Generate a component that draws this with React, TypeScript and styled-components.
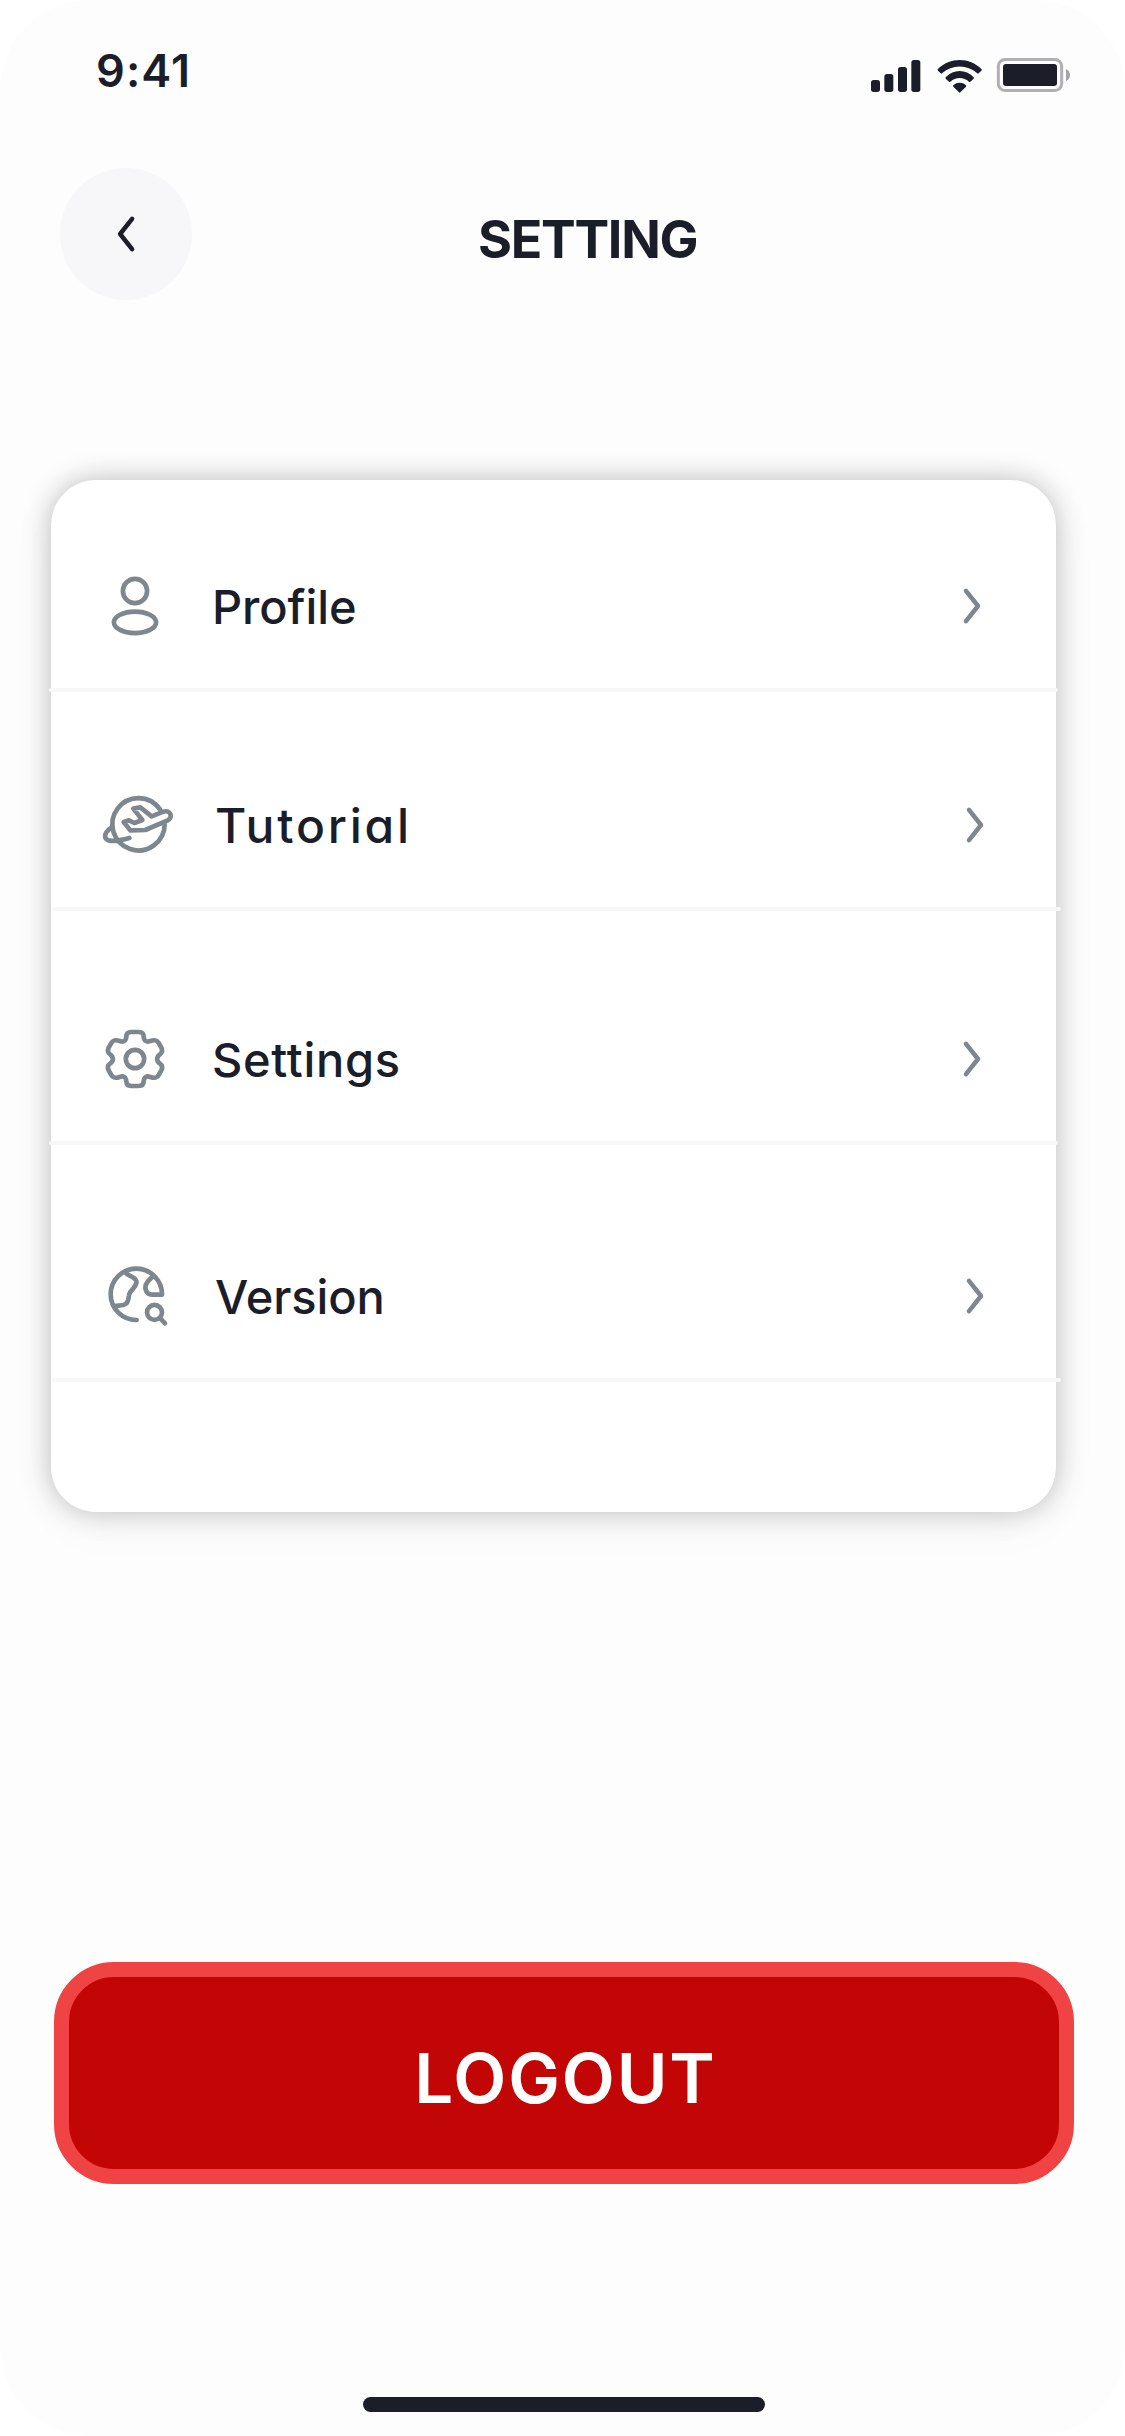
import React from "react";
import styled, { createGlobalStyle } from "styled-components";

const ink = "#1b1d28";
const muted = "#7e868e";

const GlobalStyle = createGlobalStyle`
  body { margin: 0; background: #fff; }
  *, *::before, *::after { box-sizing: border-box; }
`;

const Screen = styled.main`
  width: 1125px;
  height: 2436px;
  display: flex;
  flex-direction: column;
  background: #fdfdfd;
  border-radius: 90px;
  color: ${ink};
  font-family: Inter, "Liberation Sans", sans-serif;
`;

const StatusBar = styled.div`
  height: 132px;
  padding: 43px 53px 0 96px;
  display: flex;
  justify-content: space-between;
  align-items: flex-start;
`;

const Time = styled.span`
  font-size: 45px;
  line-height: 56px;
  font-weight: 600;
  letter-spacing: 1.1px;
`;

const StatusIcons = styled.svg`
  width: 202px;
  height: 40px;
  margin-top: 12px;
  fill: ${ink};
`;

const Header = styled.header`
  height: 168px;
  padding: 36px 60px 0;
  display: flex;
  align-items: flex-start;
`;

const BackButton = styled.button`
  width: 132px;
  height: 132px;
  padding: 0;
  border: 0;
  border-radius: 50%;
  background: #f7f7f9;
  display: flex;
  align-items: center;
  justify-content: center;
`;

const Title = styled.h1`
  margin: 41px 0 0 286px;
  font-size: 52px;
  line-height: 62px;
  font-weight: 700;
  letter-spacing: -1.3px;
`;

const Card = styled.section`
  width: 1005px;
  height: 1032px;
  margin: 180px 0 0 51px;
  border-radius: 45px;
  background: #fff;
  box-shadow: 0 0 28px rgba(0, 0, 0, 0.25), 0 12px 60px rgba(20, 60, 40, 0.03);
`;

const Row = styled.div<{ $height: number; $shift: number }>`
  width: 1009px;
  height: ${(p) => p.$height}px;
  margin-left: ${(p) => p.$shift}px;
  display: flex;
  flex-direction: column;
  justify-content: flex-end;
`;

const RowContent = styled.div`
  height: 72px;
  margin-bottom: 46px;
  padding: 0 74px 0 50px;
  display: flex;
  align-items: center;
`;

const Divider = styled.div`
  height: 4px;
  border-radius: 2px;
  background: #f7f7f9;
`;

const RowIcon = styled.svg`
  width: 72px;
  height: 72px;
  flex: none;
  fill: none;
  stroke: ${muted};
  stroke-width: 14;
  stroke-linecap: round;
  stroke-linejoin: round;
`;

const Label = styled.span<{ $tracking: number; $size: number; $round?: boolean }>`
  flex: 1;
  margin-left: 41px;
  padding-top: 2px;
  font-size: ${(p) => p.$size}px;
  line-height: 72px;
  font-weight: 500;
  letter-spacing: ${(p) => p.$tracking}px;
  font-feature-settings: ${(p) => (p.$round ? '"cv11"' : "normal")};
`;

const ChevronSvg = styled.svg<{ $color: string }>`
  width: 24px;
  height: 42px;
  fill: none;
  stroke: ${(p) => p.$color};
  stroke-width: 4.5;
  stroke-linecap: round;
  stroke-linejoin: round;
`;

const LogoutButton = styled.button`
  width: 1020px;
  height: 222px;
  margin: 450px 0 0 54px;
  padding: 9px 0 0 3px;
  border: 15px solid #f04444;
  border-radius: 60px;
  background: #c20606;
  color: #fff;
  font: 600 69px/84px Inter, "Liberation Sans", sans-serif;
  letter-spacing: 1.9px;
  text-align: center;
`;

const HomeIndicator = styled.div`
  width: 402px;
  height: 15px;
  margin: 213px 0 0 363px;
  border-radius: 8px;
  background: ${ink};
`;

const UserIcon = () => (
  <RowIcon viewBox="207 360 216 216">
    <circle cx="315" cy="423" r="36.3" />
    <ellipse cx="315" cy="517" rx="63.3" ry="32.3" />
  </RowIcon>
);

const PlanetIcon = () => (
  <RowIcon viewBox="216 147 216 216">
    <path d="M390 208A78.500 78.500 0 1 0 404 253" />
    <path d="M248 260C229 271 222 285 227 295C237 309 268 302 298 294" />
    <path d="M365 229L400 215C422 208 430 233 413 241L346 270L301 271L281 246L297 241L313 249L337 240L310 206L331 202Z" />
  </RowIcon>
);

const GearIcon = () => (
  <RowIcon viewBox="207 129 216 216">
    <path d="M304 156H326Q341 156 341 170C342 184 350 187 361 183C375 178 381 181 386 189L394 203C399 213 396 219 389 224C379 231 379 243 389 250C396 255 399 261 394 271L386 285C381 293 375 296 361 291C350 287 342 290 341 304Q341 318 326 318H304Q289 318 289 304C288 290 280 287 269 291C255 296 249 293 244 285L236 271C231 261 234 255 241 250C251 243 251 231 241 224C234 219 231 213 236 203L244 189C249 181 255 178 269 183C280 187 288 184 289 170Q289 156 304 156Z" />
    <circle cx="315" cy="237" r="27.500" />
  </RowIcon>
);

const GlobeSearchIcon = () => (
  <RowIcon viewBox="216 120 216 216">
    <path d="M320 300A77 77 0 1 1 396 224H366C347 224 340 200 353 185L370 167" />
    <path d="M286 157C292 168 314 168 319 183C323 202 299 209 297 226C295 237 296 245 287 252C279 258 266 256 254 258" />
    <circle cx="373.500" cy="277" r="22.500" />
    <path d="M390 294L405 310" />
  </RowIcon>
);

const Chevron = ({ left = false }: { left?: boolean }) => (
  <ChevronSvg $color={left ? ink : muted} viewBox="0 0 24 42">
    <path d={left ? "M18.100 5.800L6.100 21L18.100 36.200" : "M6 5.800L18 21L6 36.200"} />
  </ChevronSvg>
);

const rows = [
  { label: "Profile", icon: <UserIcon />, height: 212, shift: -2, size: 47, tracking: -0.1 },
  { label: "Tutorial", icon: <PlanetIcon />, height: 219, shift: 1, size: 48, tracking: 2.8, round: true },
  { label: "Settings", icon: <GearIcon />, height: 234, shift: -2, size: 47, tracking: 0.7 },
  { label: "Version", icon: <GlobeSearchIcon />, height: 237, shift: 1, size: 47, tracking: -0.1 },
];

export default function App() {
  return (
    <>
      <GlobalStyle />
      <Screen>
        <StatusBar>
          <Time>9:41</Time>
          <StatusIcons viewBox="150 165 606 120">
            <rect x="153" y="240" width="27" height="36" rx="8" />
            <rect x="193" y="222" width="27" height="54" rx="8" />
            <rect x="234" y="201" width="27" height="75" rx="8" />
            <rect x="274" y="180" width="27" height="96" rx="8" />
            <path d="M353 208C390 171 448 171 485 208Q486 210 484 212L476 220Q474 222 472 220C441 193 397 193 366 220Q364 222 362 220L354 212Q352 210 353 208Z" />
            <path d="M377 232C401 207 437 207 461 232Q462 234 461 236L451 245Q449 247 447 245C430 230 408 230 391 245Q389 247 387 245L377 236Q376 234 377 232Z" />
            <path d="M400 256C410 246 428 246 438 256Q440 258 438 260L421 277Q419 279 417 277L400 260Q398 258 400 256Z" />
            <rect x="535" y="178.500" width="190" height="93" rx="20" fill="none" stroke="#afafb4" strokeWidth="9" />
            <rect x="549" y="192" width="162" height="66" rx="9" />
            <path d="M738 207Q750 213 750 225Q750 237 738 243Z" fill="#a3a4a9" />
          </StatusIcons>
        </StatusBar>
        <Header>
          <BackButton aria-label="Back">
            <Chevron left />
          </BackButton>
          <Title>SETTING</Title>
        </Header>
        <Card>
          {rows.map((row) => (
            <Row key={row.label} $height={row.height} $shift={row.shift}>
              <RowContent>
                {row.icon}
                <Label $size={row.size} $tracking={row.tracking} $round={row.round}>
                  {row.label}
                </Label>
                <Chevron />
              </RowContent>
              <Divider />
            </Row>
          ))}
        </Card>
        <LogoutButton>LOGOUT</LogoutButton>
        <HomeIndicator />
      </Screen>
    </>
  );
}
